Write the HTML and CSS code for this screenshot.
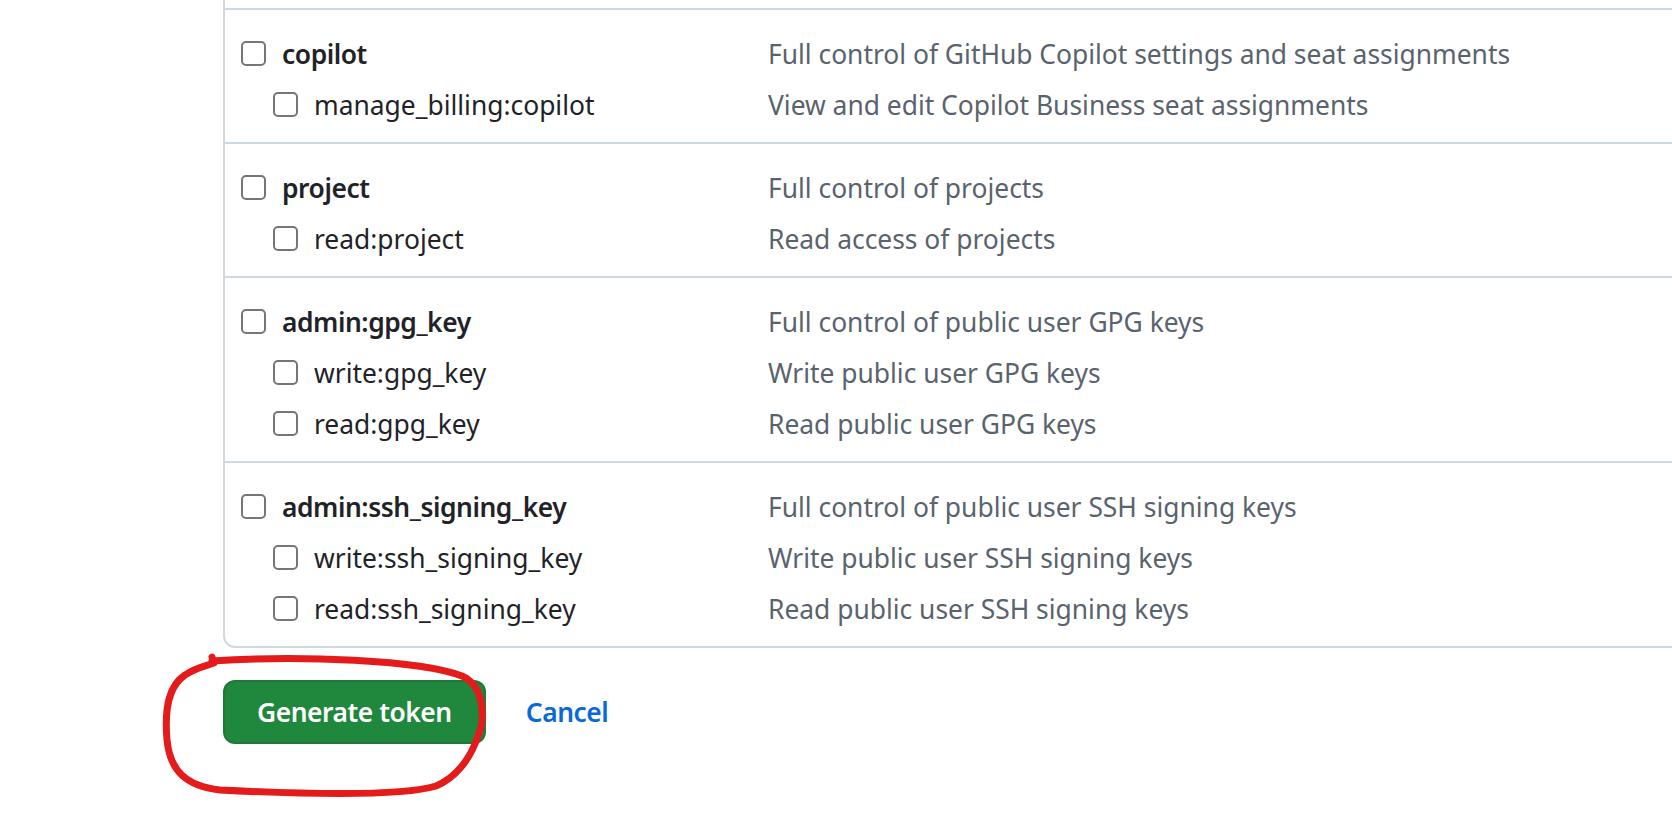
FILE: index.html
```html
<!DOCTYPE html>
<html lang="en">
<head>
<meta charset="utf-8">
<title>New personal access token (classic)</title>
<link rel="stylesheet" href="styles.css">
</head>
<body>
<main class="page">
  <div class="scopes">
    <div class="scope-group scope-group--tail"></div>

    <div class="scope-group">
      <div class="scope-row">
        <label class="scope-label"><input type="checkbox" class="scope-check"><span class="scope-name scope-name--parent">copilot</span></label>
        <span class="scope-desc">Full control of GitHub Copilot settings and seat assignments</span>
      </div>
      <div class="scope-row scope-row--child">
        <label class="scope-label"><input type="checkbox" class="scope-check"><span class="scope-name">manage_billing:copilot</span></label>
        <span class="scope-desc">View and edit Copilot Business seat assignments</span>
      </div>
    </div>

    <div class="scope-group">
      <div class="scope-row">
        <label class="scope-label"><input type="checkbox" class="scope-check"><span class="scope-name scope-name--parent">project</span></label>
        <span class="scope-desc">Full control of projects</span>
      </div>
      <div class="scope-row scope-row--child">
        <label class="scope-label"><input type="checkbox" class="scope-check"><span class="scope-name">read:project</span></label>
        <span class="scope-desc">Read access of projects</span>
      </div>
    </div>

    <div class="scope-group">
      <div class="scope-row">
        <label class="scope-label"><input type="checkbox" class="scope-check"><span class="scope-name scope-name--parent">admin:gpg_key</span></label>
        <span class="scope-desc">Full control of public user GPG keys</span>
      </div>
      <div class="scope-row scope-row--child">
        <label class="scope-label"><input type="checkbox" class="scope-check"><span class="scope-name">write:gpg_key</span></label>
        <span class="scope-desc">Write public user GPG keys</span>
      </div>
      <div class="scope-row scope-row--child">
        <label class="scope-label"><input type="checkbox" class="scope-check"><span class="scope-name">read:gpg_key</span></label>
        <span class="scope-desc">Read public user GPG keys</span>
      </div>
    </div>

    <div class="scope-group">
      <div class="scope-row">
        <label class="scope-label"><input type="checkbox" class="scope-check"><span class="scope-name scope-name--parent">admin:ssh_signing_key</span></label>
        <span class="scope-desc">Full control of public user SSH signing keys</span>
      </div>
      <div class="scope-row scope-row--child">
        <label class="scope-label"><input type="checkbox" class="scope-check"><span class="scope-name">write:ssh_signing_key</span></label>
        <span class="scope-desc">Write public user SSH signing keys</span>
      </div>
      <div class="scope-row scope-row--child">
        <label class="scope-label"><input type="checkbox" class="scope-check"><span class="scope-name">read:ssh_signing_key</span></label>
        <span class="scope-desc">Read public user SSH signing keys</span>
      </div>
    </div>
  </div>

  <div class="form-actions">
    <button type="submit" class="btn-primary">Generate token</button>
    <a href="#" class="btn-cancel">Cancel</a>
  </div>
</main>

<svg class="annotation" width="1672" height="814" viewBox="0 0 1672 814" aria-hidden="true">
  <path d="M212,661 C300,655 420,660 462,676 C485,686 485,720 478,736 C470,760 455,778 436,786 C400,797 300,794 220,790 C185,786 170,770 167,740 C164,705 170,685 185,675 C195,668 205,666 214,663 L212,657" fill="none" stroke="#e31b1b" stroke-width="7" stroke-linecap="round" stroke-linejoin="round"/>
</svg>
</body>
</html>
```

FILE: styles.css
```css
* { box-sizing: border-box; }

html, body {
  margin: 0;
  padding: 0;
  background: #ffffff;
}

body {
  width: 1672px;
  height: 814px;
  overflow: hidden;
  position: relative;
  font-family: "Noto Sans", sans-serif;
  font-size: 26.4px;
  color: #1f2328;
}

.page {
  padding-left: 223px;
}

.scopes {
  width: 1520px;
  border: 2px solid #d1d9e0;
  border-top: 0;
  border-radius: 0 0 12px 12px;
}

.scope-group {
  padding: 18px 0 12px 16px;
  border-bottom: 2px solid #d1d9e0;
}

.scope-group:last-child {
  border-bottom: 0;
}

.scope-group--tail {
  height: 10px;
  padding: 0;
}

.scope-row {
  display: grid;
  grid-template-columns: 527px 1fr;
  align-items: center;
  height: 51px;
}

.scope-label {
  display: flex;
  align-items: center;
  gap: 16px;
  white-space: nowrap;
}

.scope-row--child .scope-label {
  padding-left: 32px;
}

.scope-check {
  appearance: none;
  -webkit-appearance: none;
  margin: 0;
  width: 25px;
  height: 25px;
  border: 2px solid #767676;
  border-radius: 5px;
  background: #fff;
  flex: none;
}

.scope-name {
  color: #1f2328;
}

.scope-name--parent {
  font-weight: 600;
  letter-spacing: -0.45px;
}

.scope-desc {
  color: #59636e;
  white-space: nowrap;
}

.form-actions {
  display: flex;
  align-items: center;
  margin-top: 32px;
}

.btn-primary {
  height: 64px;
  padding: 0 32px;
  border: 2px solid rgba(31, 35, 40, 0.15);
  border-radius: 12px;
  background: #1f883d;
  color: #ffffff;
  font-family: inherit;
  font-size: 26.4px;
  font-weight: 600;
  letter-spacing: -0.45px;
}

.btn-cancel {
  margin-left: 40px;
  color: #0969da;
  font-weight: 600;
  letter-spacing: -0.45px;
  text-decoration: none;
}

.annotation {
  position: absolute;
  left: 0;
  top: 0;
  pointer-events: none;
}
```
